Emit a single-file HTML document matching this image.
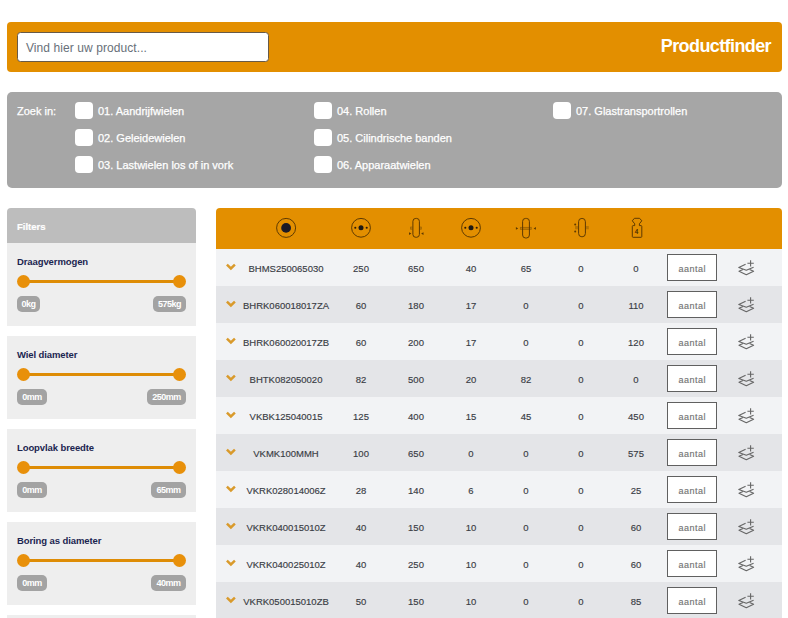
<!DOCTYPE html>
<html><head><meta charset="utf-8"><style>
*{box-sizing:border-box;margin:0;padding:0}
html,body{width:788px;height:618px;overflow:hidden;background:#fff;font-family:"Liberation Sans",sans-serif}
.abs{position:absolute}
#top{left:7px;top:22px;width:775px;height:50px;background:#E38F00;border-radius:4px}
#search{left:17px;top:32px;width:252px;height:30px;background:#fff;border:1px solid #675a48;border-radius:3.5px}
#search span{position:absolute;left:8px;top:1.5px;line-height:27px;font-size:12px;letter-spacing:0.08px;color:#687079;white-space:nowrap}
#pf{right:17px;top:20.5px;line-height:50px;font-size:18px;letter-spacing:-0.6px;font-weight:bold;color:#fff;white-space:nowrap}
#zoek{left:7px;top:92px;width:775px;height:96px;background:#A6A6A6;border-radius:5px}
.zl{font-size:11px;line-height:17px;color:#fff;-webkit-text-stroke:0.25px #fff;position:absolute;white-space:nowrap}
.cb{position:absolute;width:18px;height:17px;background:#fff;border-radius:4px}
#side{left:7px;top:208px;width:189px}
#fhead{height:35px;background:#BDBDBD;border-radius:4px 4px 0 0;color:#fff;font-weight:bold;font-size:9.5px;line-height:37px;padding:0 0 0 10px;-webkit-text-stroke:0.2px #fff}
.fp{background:#EEEEEE;height:83px;position:relative;margin-bottom:10px}
.fp .t{position:absolute;left:10px;top:6px;line-height:25px;font-size:9.5px;letter-spacing:-0.1px;font-weight:bold;color:#1b2550;white-space:nowrap}
.fp .tr{position:absolute;left:17px;top:37px;width:155px;height:3px;background:#DE8C05}
.fp .h{position:absolute;top:32px;width:13px;height:13px;border-radius:50%;background:#E8900A}
.fp .p{position:absolute;top:53px;height:16px;border-radius:5px;background:#A3A3A3;color:#fff;font-size:9px;font-weight:bold;letter-spacing:-0.5px;line-height:17px;text-align:center;white-space:nowrap}
#tbl{left:216px;top:208px;width:566px}
#thead{height:41px;background:#E38F00;border-radius:4px 4px 0 0;position:relative}
#thead svg{position:absolute}
.row{height:37px;position:relative;font-size:9.5px;color:#3a3d45;-webkit-text-stroke:0.15px #3a3d45}
.row.o{background:#F2F3F5}
.row.e{background:#E4E5E8}
.c{position:absolute;top:0;line-height:39px;text-align:center;width:55px;white-space:nowrap}
.code{left:20px;width:100px}
.chev{position:absolute;left:9px;top:14px}
.inp{position:absolute;left:451px;top:5px;width:50px;height:27px;border:1px solid #606060;background:#fff;font-size:9px;letter-spacing:0.5px;padding-left:0.5px;color:#747474;-webkit-text-stroke:0.15px #747474;text-align:center;line-height:29px;overflow:hidden}
.lay{position:absolute;left:520px;top:10px}
</style></head><body>
<div id="top" class="abs"></div>
<div id="search" class="abs"><span>Vind hier uw product...</span></div>
<div id="pf" class="abs">Productfinder</div>
<div id="zoek" class="abs"><div class="zl" style="left:10px;top:11px">Zoek in:</div><div class="cb" style="left:68px;top:10px"></div><div class="zl" style="left:91px;top:11px">01. Aandrijfwielen</div><div class="cb" style="left:68px;top:37px"></div><div class="zl" style="left:91px;top:38px">02. Geleidewielen</div><div class="cb" style="left:68px;top:64px"></div><div class="zl" style="left:91px;top:65px">03. Lastwielen los of in vork</div><div class="cb" style="left:307px;top:10px"></div><div class="zl" style="left:330px;top:11px">04. Rollen</div><div class="cb" style="left:307px;top:37px"></div><div class="zl" style="left:330px;top:38px">05. Cilindrische banden</div><div class="cb" style="left:307px;top:64px"></div><div class="zl" style="left:330px;top:65px">06. Apparaatwielen</div><div class="cb" style="left:546px;top:10px"></div><div class="zl" style="left:569px;top:11px">07. Glastransportrollen</div></div>
<div id="side" class="abs"><div id="fhead">Filters</div><div class="fp"><div class="t">Draagvermogen</div><div class="tr"></div><div class="h" style="left:10px"></div><div class="h" style="left:166px"></div><div class="p" style="left:10px;width:23px">0kg</div><div class="p" style="left:146px;width:33px">575kg</div></div><div class="fp"><div class="t">Wiel diameter</div><div class="tr"></div><div class="h" style="left:10px"></div><div class="h" style="left:166px"></div><div class="p" style="left:10px;width:30px">0mm</div><div class="p" style="left:140px;width:39px">250mm</div></div><div class="fp"><div class="t">Loopvlak breedte</div><div class="tr"></div><div class="h" style="left:10px"></div><div class="h" style="left:166px"></div><div class="p" style="left:10px;width:30px">0mm</div><div class="p" style="left:144px;width:35px">65mm</div></div><div class="fp"><div class="t">Boring as diameter</div><div class="tr"></div><div class="h" style="left:10px"></div><div class="h" style="left:166px"></div><div class="p" style="left:10px;width:30px">0mm</div><div class="p" style="left:144px;width:35px">40mm</div></div><div class="fp"></div></div>
<div id="tbl" class="abs"><div id="thead"><svg style="left:58px;top:8px" width="24" height="24" viewBox="0 0 24 24"><circle cx="12.1" cy="11.9" r="9.5" fill="none" stroke="#5e3a02" stroke-width="1"/><circle cx="12.1" cy="11.9" r="4.9" fill="#1c1a26"/></svg><svg style="left:133px;top:8px" width="24" height="24" viewBox="0 0 24 24"><circle cx="12" cy="11.8" r="9.4" fill="none" stroke="#5e3a02" stroke-width="1"/><circle cx="12" cy="11.8" r="2.5" fill="#1e1a14"/><circle cx="6.3" cy="11.8" r="1.05" fill="#2a1a0a"/><circle cx="17.7" cy="11.8" r="1.05" fill="#2a1a0a"/></svg><svg style="left:243px;top:8px" width="24" height="24" viewBox="0 0 24 24"><circle cx="12" cy="11.8" r="9.4" fill="none" stroke="#5e3a02" stroke-width="1"/><circle cx="12" cy="11.8" r="2.5" fill="#1e1a14"/><circle cx="6.3" cy="11.8" r="1.05" fill="#2a1a0a"/><circle cx="17.7" cy="11.8" r="1.05" fill="#2a1a0a"/></svg><svg style="left:188px;top:8px" width="24" height="24" viewBox="0 0 24 24"><rect x="8.9" y="2.4" width="6.5" height="18.9" rx="2.9" fill="none" stroke="#5e3a02" stroke-width="1"/><path d="M8.4 10.9h-1.9v2.4h1.9M15.9 10.9h1.5v2.4h-1.5" fill="#5e3a02" fill-opacity="0.25" stroke="#5e3a02" stroke-opacity="0.45" stroke-width="0.7"/><path d="M5 16.3l2.4 1.3-2.4 1.3z M19.5 16.3l-2.4 1.3 2.4 1.3z" fill="#5e3a02"/></svg><svg style="left:298px;top:8px" width="24" height="24" viewBox="0 0 24 24"><rect x="8.6" y="2.4" width="6.8" height="19.6" rx="3" fill="none" stroke="#5e3a02" stroke-width="1"/><rect x="6.3" y="11.3" width="11" height="2.1" fill="#5e3a02" fill-opacity="0.25" stroke="#5e3a02" stroke-opacity="0.45" stroke-width="0.7"/><path d="M1.9 11.1l2.3 1.3-2.3 1.3z M21.9 11.1l-2.3 1.3 2.3 1.3z" fill="#5e3a02"/></svg><svg style="left:353px;top:8px" width="24" height="24" viewBox="0 0 24 24"><rect x="9.6" y="2.4" width="6.8" height="18.4" rx="3.3" fill="none" stroke="#5e3a02" stroke-width="1"/><path d="M6 10.1h3.1v3.2h-3.1zM16.9 10.1h2.9v3.2h-2.9z" fill="#5e3a02" fill-opacity="0.3"/><circle cx="6.2" cy="8.4" r="1" fill="#5e3a02"/><circle cx="6.2" cy="15.4" r="1" fill="#5e3a02"/></svg><svg style="left:408px;top:8px" width="24" height="24" viewBox="0 0 24 24"><path d="M10.4 2.3H15.6L17.8 4.8L15.4 7.8V9.6H17Q17.8 9.6 17.8 10.4V20.5Q17.8 21.3 17 21.3H9.1Q8.3 21.3 8.3 20.5V10.4Q8.3 9.6 9.1 9.6H10.7V7.8L8.3 4.8Z" fill="none" stroke="#5e3a02" stroke-width="1" stroke-linejoin="round"/><text transform="translate(12.6 17.7) scale(0.8 1)" x="0" y="0" font-size="8" font-family="Liberation Sans" text-anchor="middle" fill="#3a2400" stroke="#3a2400" stroke-width="0.2">4</text></svg></div><div class="row o"><svg class="chev" width="14" height="10" viewBox="0 0 14 10"><path d="M1.9 1.7 L5.9 5.5 L9.9 1.7" fill="none" stroke="#D99A2B" stroke-width="2.5"/></svg><div class="c code">BHMS250065030</div><div class="c" style="left:117.5px">250</div><div class="c" style="left:172.5px">650</div><div class="c" style="left:227.5px">40</div><div class="c" style="left:282.5px">65</div><div class="c" style="left:337.5px">0</div><div class="c" style="left:392.5px">0</div><div class="inp">aantal</div><svg class="lay" width="22" height="20" viewBox="0 0 22 20"><g stroke="#666" stroke-width="1.1" fill="none" stroke-linejoin="round"><path d="M14.6 1.2v6.3M11.4 4.3h6.4"/><path d="M9.6 5.2L2.8 8.4 10.3 11.3 17.6 8.2"/><path d="M7 10.4L3 12.3 10.3 15.7 17.6 12.3 13.6 10.4"/></g></svg></div><div class="row e"><svg class="chev" width="14" height="10" viewBox="0 0 14 10"><path d="M1.9 1.7 L5.9 5.5 L9.9 1.7" fill="none" stroke="#D99A2B" stroke-width="2.5"/></svg><div class="c code">BHRK060018017ZA</div><div class="c" style="left:117.5px">60</div><div class="c" style="left:172.5px">180</div><div class="c" style="left:227.5px">17</div><div class="c" style="left:282.5px">0</div><div class="c" style="left:337.5px">0</div><div class="c" style="left:392.5px">110</div><div class="inp">aantal</div><svg class="lay" width="22" height="20" viewBox="0 0 22 20"><g stroke="#666" stroke-width="1.1" fill="none" stroke-linejoin="round"><path d="M14.6 1.2v6.3M11.4 4.3h6.4"/><path d="M9.6 5.2L2.8 8.4 10.3 11.3 17.6 8.2"/><path d="M7 10.4L3 12.3 10.3 15.7 17.6 12.3 13.6 10.4"/></g></svg></div><div class="row o"><svg class="chev" width="14" height="10" viewBox="0 0 14 10"><path d="M1.9 1.7 L5.9 5.5 L9.9 1.7" fill="none" stroke="#D99A2B" stroke-width="2.5"/></svg><div class="c code">BHRK060020017ZB</div><div class="c" style="left:117.5px">60</div><div class="c" style="left:172.5px">200</div><div class="c" style="left:227.5px">17</div><div class="c" style="left:282.5px">0</div><div class="c" style="left:337.5px">0</div><div class="c" style="left:392.5px">120</div><div class="inp">aantal</div><svg class="lay" width="22" height="20" viewBox="0 0 22 20"><g stroke="#666" stroke-width="1.1" fill="none" stroke-linejoin="round"><path d="M14.6 1.2v6.3M11.4 4.3h6.4"/><path d="M9.6 5.2L2.8 8.4 10.3 11.3 17.6 8.2"/><path d="M7 10.4L3 12.3 10.3 15.7 17.6 12.3 13.6 10.4"/></g></svg></div><div class="row e"><svg class="chev" width="14" height="10" viewBox="0 0 14 10"><path d="M1.9 1.7 L5.9 5.5 L9.9 1.7" fill="none" stroke="#D99A2B" stroke-width="2.5"/></svg><div class="c code">BHTK082050020</div><div class="c" style="left:117.5px">82</div><div class="c" style="left:172.5px">500</div><div class="c" style="left:227.5px">20</div><div class="c" style="left:282.5px">82</div><div class="c" style="left:337.5px">0</div><div class="c" style="left:392.5px">0</div><div class="inp">aantal</div><svg class="lay" width="22" height="20" viewBox="0 0 22 20"><g stroke="#666" stroke-width="1.1" fill="none" stroke-linejoin="round"><path d="M14.6 1.2v6.3M11.4 4.3h6.4"/><path d="M9.6 5.2L2.8 8.4 10.3 11.3 17.6 8.2"/><path d="M7 10.4L3 12.3 10.3 15.7 17.6 12.3 13.6 10.4"/></g></svg></div><div class="row o"><svg class="chev" width="14" height="10" viewBox="0 0 14 10"><path d="M1.9 1.7 L5.9 5.5 L9.9 1.7" fill="none" stroke="#D99A2B" stroke-width="2.5"/></svg><div class="c code">VKBK125040015</div><div class="c" style="left:117.5px">125</div><div class="c" style="left:172.5px">400</div><div class="c" style="left:227.5px">15</div><div class="c" style="left:282.5px">45</div><div class="c" style="left:337.5px">0</div><div class="c" style="left:392.5px">450</div><div class="inp">aantal</div><svg class="lay" width="22" height="20" viewBox="0 0 22 20"><g stroke="#666" stroke-width="1.1" fill="none" stroke-linejoin="round"><path d="M14.6 1.2v6.3M11.4 4.3h6.4"/><path d="M9.6 5.2L2.8 8.4 10.3 11.3 17.6 8.2"/><path d="M7 10.4L3 12.3 10.3 15.7 17.6 12.3 13.6 10.4"/></g></svg></div><div class="row e"><svg class="chev" width="14" height="10" viewBox="0 0 14 10"><path d="M1.9 1.7 L5.9 5.5 L9.9 1.7" fill="none" stroke="#D99A2B" stroke-width="2.5"/></svg><div class="c code">VKMK100MMH</div><div class="c" style="left:117.5px">100</div><div class="c" style="left:172.5px">650</div><div class="c" style="left:227.5px">0</div><div class="c" style="left:282.5px">0</div><div class="c" style="left:337.5px">0</div><div class="c" style="left:392.5px">575</div><div class="inp">aantal</div><svg class="lay" width="22" height="20" viewBox="0 0 22 20"><g stroke="#666" stroke-width="1.1" fill="none" stroke-linejoin="round"><path d="M14.6 1.2v6.3M11.4 4.3h6.4"/><path d="M9.6 5.2L2.8 8.4 10.3 11.3 17.6 8.2"/><path d="M7 10.4L3 12.3 10.3 15.7 17.6 12.3 13.6 10.4"/></g></svg></div><div class="row o"><svg class="chev" width="14" height="10" viewBox="0 0 14 10"><path d="M1.9 1.7 L5.9 5.5 L9.9 1.7" fill="none" stroke="#D99A2B" stroke-width="2.5"/></svg><div class="c code">VKRK028014006Z</div><div class="c" style="left:117.5px">28</div><div class="c" style="left:172.5px">140</div><div class="c" style="left:227.5px">6</div><div class="c" style="left:282.5px">0</div><div class="c" style="left:337.5px">0</div><div class="c" style="left:392.5px">25</div><div class="inp">aantal</div><svg class="lay" width="22" height="20" viewBox="0 0 22 20"><g stroke="#666" stroke-width="1.1" fill="none" stroke-linejoin="round"><path d="M14.6 1.2v6.3M11.4 4.3h6.4"/><path d="M9.6 5.2L2.8 8.4 10.3 11.3 17.6 8.2"/><path d="M7 10.4L3 12.3 10.3 15.7 17.6 12.3 13.6 10.4"/></g></svg></div><div class="row e"><svg class="chev" width="14" height="10" viewBox="0 0 14 10"><path d="M1.9 1.7 L5.9 5.5 L9.9 1.7" fill="none" stroke="#D99A2B" stroke-width="2.5"/></svg><div class="c code">VKRK040015010Z</div><div class="c" style="left:117.5px">40</div><div class="c" style="left:172.5px">150</div><div class="c" style="left:227.5px">10</div><div class="c" style="left:282.5px">0</div><div class="c" style="left:337.5px">0</div><div class="c" style="left:392.5px">60</div><div class="inp">aantal</div><svg class="lay" width="22" height="20" viewBox="0 0 22 20"><g stroke="#666" stroke-width="1.1" fill="none" stroke-linejoin="round"><path d="M14.6 1.2v6.3M11.4 4.3h6.4"/><path d="M9.6 5.2L2.8 8.4 10.3 11.3 17.6 8.2"/><path d="M7 10.4L3 12.3 10.3 15.7 17.6 12.3 13.6 10.4"/></g></svg></div><div class="row o"><svg class="chev" width="14" height="10" viewBox="0 0 14 10"><path d="M1.9 1.7 L5.9 5.5 L9.9 1.7" fill="none" stroke="#D99A2B" stroke-width="2.5"/></svg><div class="c code">VKRK040025010Z</div><div class="c" style="left:117.5px">40</div><div class="c" style="left:172.5px">250</div><div class="c" style="left:227.5px">10</div><div class="c" style="left:282.5px">0</div><div class="c" style="left:337.5px">0</div><div class="c" style="left:392.5px">60</div><div class="inp">aantal</div><svg class="lay" width="22" height="20" viewBox="0 0 22 20"><g stroke="#666" stroke-width="1.1" fill="none" stroke-linejoin="round"><path d="M14.6 1.2v6.3M11.4 4.3h6.4"/><path d="M9.6 5.2L2.8 8.4 10.3 11.3 17.6 8.2"/><path d="M7 10.4L3 12.3 10.3 15.7 17.6 12.3 13.6 10.4"/></g></svg></div><div class="row e"><svg class="chev" width="14" height="10" viewBox="0 0 14 10"><path d="M1.9 1.7 L5.9 5.5 L9.9 1.7" fill="none" stroke="#D99A2B" stroke-width="2.5"/></svg><div class="c code">VKRK050015010ZB</div><div class="c" style="left:117.5px">50</div><div class="c" style="left:172.5px">150</div><div class="c" style="left:227.5px">10</div><div class="c" style="left:282.5px">0</div><div class="c" style="left:337.5px">0</div><div class="c" style="left:392.5px">85</div><div class="inp">aantal</div><svg class="lay" width="22" height="20" viewBox="0 0 22 20"><g stroke="#666" stroke-width="1.1" fill="none" stroke-linejoin="round"><path d="M14.6 1.2v6.3M11.4 4.3h6.4"/><path d="M9.6 5.2L2.8 8.4 10.3 11.3 17.6 8.2"/><path d="M7 10.4L3 12.3 10.3 15.7 17.6 12.3 13.6 10.4"/></g></svg></div></div>
</body></html>
